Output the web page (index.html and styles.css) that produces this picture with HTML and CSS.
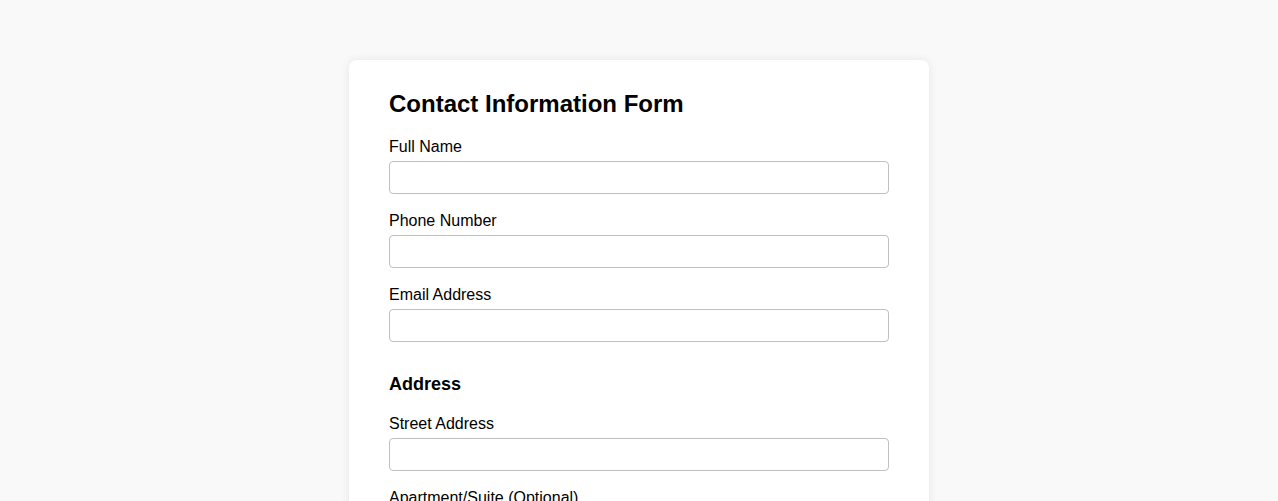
FILE: index.html
```html
<!DOCTYPE html>
<html lang="en">
<head>
<meta charset="utf-8">
<title>Contact Information Form</title>
<link rel="stylesheet" href="styles.css">
</head>
<body>
<main class="page">
  <form class="card">
    <h1 class="title">Contact Information Form</h1>
    <div class="group">
      <label class="label" for="name">Full Name</label>
      <input class="input" id="name" type="text">
    </div>
    <div class="group">
      <label class="label" for="phone">Phone Number</label>
      <input class="input" id="phone" type="tel">
    </div>
    <div class="group">
      <label class="label" for="email">Email Address</label>
      <input class="input" id="email" type="email">
    </div>
    <h2 class="section">Address</h2>
    <div class="group">
      <label class="label" for="street">Street Address</label>
      <input class="input" id="street" type="text">
    </div>
    <div class="group">
      <label class="label" for="apt">Apartment/Suite (Optional)</label>
      <input class="input" id="apt" type="text">
    </div>
    <div class="group">
      <label class="label" for="city">City</label>
      <input class="input" id="city" type="text">
    </div>
  </form>
</main>
</body>
</html>
```
FILE: styles.css
```css
html, body {
  margin: 0;
  padding: 0;
}
body {
  background: #f9f9f9;
  font-family: "Liberation Sans", Arial, sans-serif;
  color: #000;
}
.page {
  display: flex;
  justify-content: center;
  padding-top: 60px;
}
.card {
  width: 580px;
  box-sizing: border-box;
  background: #fff;
  border-radius: 8px;
  box-shadow: 0 0 10px rgba(0, 0, 0, 0.08);
  padding: 30px 40px 40px;
}
.title {
  font-size: 24px;
  font-weight: bold;
  margin: 0 0 20px;
  line-height: normal;
}
.group {
  margin-bottom: 18px;
}
.label {
  display: block;
  font-size: 16px;
  margin-bottom: 5px;
}
.input {
  display: block;
  width: 100%;
  box-sizing: border-box;
  height: 33px;
  padding: 8px;
  border: 1px solid #c0c0c0;
  border-radius: 4px;
  font-family: "Liberation Sans", Arial, sans-serif;
  font-size: 13.33px;
  background: #fff;
}
.section {
  font-size: 18px;
  font-weight: bold;
  line-height: 21px;
  margin: 32px 0 20px;
}
```
